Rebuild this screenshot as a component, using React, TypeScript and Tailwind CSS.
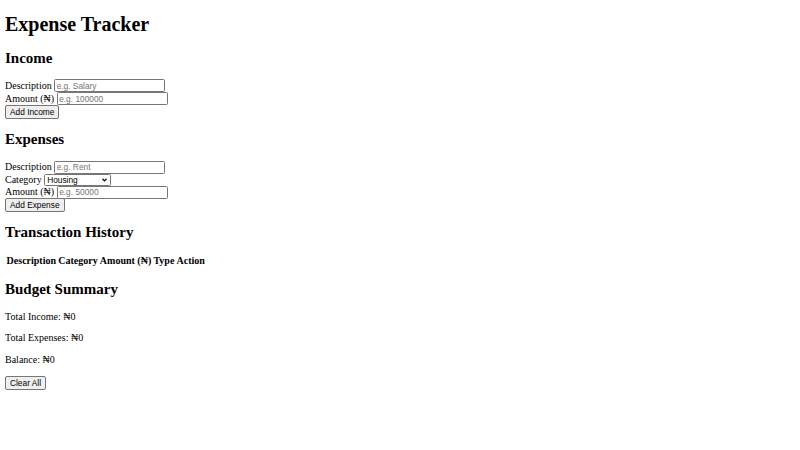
import { useState } from "react";

const serif = "font-['Liberation_Serif','DejaVu_Serif',serif]";
const inputCls =
  "w-[111px] h-[13px] border border-[#767676] rounded-[1.5px] bg-white px-[1.5px] text-[8.33px] leading-none text-black font-['Liberation_Sans',Arial,sans-serif] placeholder:text-[#757575] outline-none";
const buttonCls =
  "h-[13.5px] px-[4px] bg-[#efefef] border border-[#767676] rounded-[2px] text-[8.33px] leading-none text-black font-['Liberation_Sans',Arial,sans-serif]";

export default function App() {
  const [category, setCategory] = useState("Housing");

  return (
    <div className={`p-[5px] ${serif} text-[10px] leading-[11.5px] text-black bg-white min-h-[450px]`}>
      <h1 className="text-[20px] font-bold leading-[23px] mt-[8.4px] mb-[13.4px]">Expense Tracker</h1>

      <h2 className="text-[15px] font-bold leading-[17.25px] my-[12.45px]">Income</h2>
      <div>
        <div className="flex items-center h-[13px] gap-[2.5px]">
          <span>Description</span>
          <input className={inputCls} placeholder="e.g. Salary" />
        </div>
        <div className="flex items-center h-[13px] gap-[2.5px]">
          <span>Amount (₦)</span>
          <input className={inputCls} placeholder="e.g. 100000" />
        </div>
        <div className="flex items-center h-[13px]">
          <button className={buttonCls}>Add Income</button>
        </div>
      </div>

      <h2 className="text-[15px] font-bold leading-[17.25px] my-[12.45px]">Expenses</h2>
      <div>
        <div className="flex items-center h-[13px] gap-[2.5px]">
          <span>Description</span>
          <input className={inputCls} placeholder="e.g. Rent" />
        </div>
        <div className="flex items-center h-[12px] gap-[2.5px]">
          <span>Category</span>
          <div className="relative">
            <select
              value={category}
              onChange={(e) => setCategory(e.target.value)}
              className="block appearance-none w-[67px] h-[12px] border border-[#767676] rounded-[1.5px] bg-white text-[8.33px] leading-[10px] py-0 text-black font-['Liberation_Sans',Arial,sans-serif] pl-[2px] outline-none"
            >
              <option>Housing</option>
              <option>Food</option>
              <option>Transport</option>
              <option>Utilities</option>
              <option>Other</option>
            </select>
            <svg
              className="pointer-events-none absolute right-[4px] top-[4px] w-[5px] h-[4px]"
              viewBox="0 0 10 8"
              fill="none"
              stroke="black"
              strokeWidth="2.4"
            >
              <path d="M1 1.5 L5 5.8 L9 1.5" />
            </svg>
          </div>
        </div>
        <div className="flex items-center h-[13px] gap-[2.5px]">
          <span>Amount (₦)</span>
          <input className={inputCls} placeholder="e.g. 50000" />
        </div>
        <div className="flex items-center h-[13px]">
          <button className={buttonCls}>Add Expense</button>
        </div>
      </div>

      <h2 className="text-[15px] font-bold leading-[17.25px] my-[12.45px]">Transaction History</h2>
      <table className="border-separate border-spacing-[1.25px]">
        <thead>
          <tr>
            <th className="p-[0.6px] font-bold">Description</th>
            <th className="p-[0.6px] font-bold">Category</th>
            <th className="p-[0.6px] font-bold">Amount (₦)</th>
            <th className="p-[0.6px] font-bold">Type</th>
            <th className="p-[0.6px] font-bold">Action</th>
          </tr>
        </thead>
        <tbody></tbody>
      </table>

      <h2 className="text-[15px] font-bold leading-[17.25px] my-[12.45px]">Budget Summary</h2>
      <p className="my-[10.4px]">Total Income: ₦0</p>
      <p className="my-[10.4px]">Total Expenses: ₦0</p>
      <p className="my-[10.4px]">Balance: ₦0</p>
      <div className="flex items-center h-[13.5px]">
        <button className={buttonCls}>Clear All</button>
      </div>
    </div>
  );
}
